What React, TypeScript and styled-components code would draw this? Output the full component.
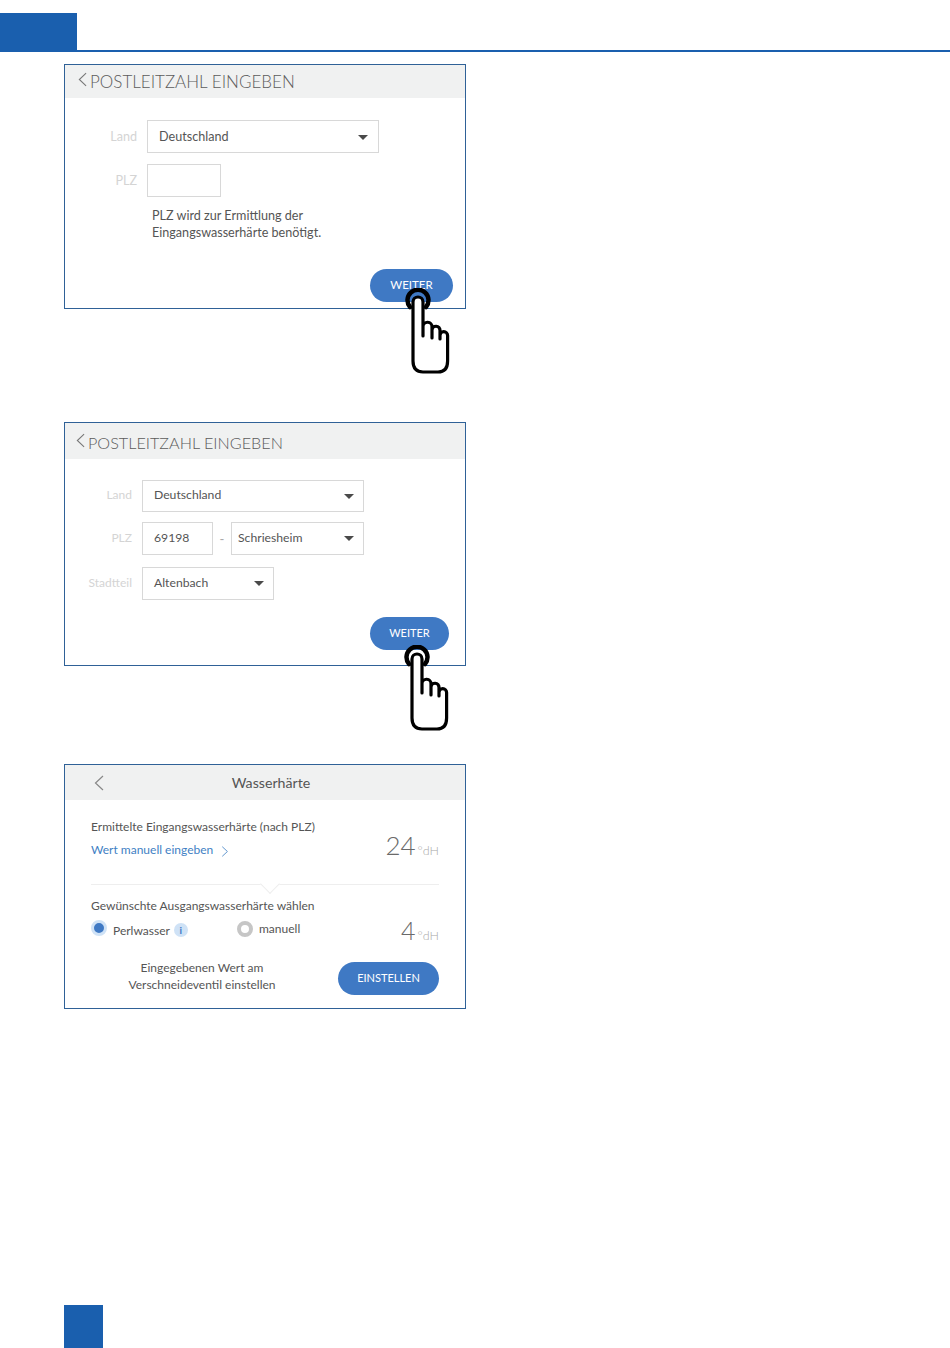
import React from 'react';
import styled, { createGlobalStyle } from 'styled-components';

const GlobalStyle = createGlobalStyle`
  html, body { margin: 0; padding: 0; background: #fff; }
  body { font-family: Lato, "Open Sans", sans-serif; color: #555; }
`;

const Page = styled.div`
  width: 950px;
  height: 1348px;
  display: flex;
  flex-direction: column;
  overflow: hidden;
`;

const TopBar = styled.div`
  height: 37px;
  margin-top: 13px;
  border-bottom: 2px solid #1a5fae;
  flex: none;
`;

const TopBlock = styled.div`
  width: 77px;
  height: 38px;
  background: #1a5fae;
`;

const Panels = styled.div`
  flex: 1;
  padding: 12px 0 0 64px;
  display: flex;
  flex-direction: column;
`;

const Panel = styled.section<{ $height: number; $gap?: number }>`
  position: relative;
  box-sizing: border-box;
  width: 402px;
  height: ${(p) => p.$height}px;
  margin-bottom: ${(p) => p.$gap ?? 0}px;
  border: 1px solid #2f6197;
  display: flex;
  flex-direction: column;
`;

const Header = styled.header<{ $height: number; $indent: number; $size: number; $nudge: number }>`
  box-sizing: border-box;
  height: ${(p) => p.$height}px;
  flex: none;
  background: #f0f1f1;
  display: flex;
  align-items: center;
  padding-left: ${(p) => p.$indent}px;
  padding-top: ${(p) => Math.max(p.$nudge, 0)}px;
  padding-bottom: ${(p) => Math.max(-p.$nudge, 0)}px;
  gap: 3px;
  font-size: ${(p) => p.$size}px;
  font-weight: 300;
  color: #5c5c5c;

  svg {
    margin-top: -4px;
  }
`;

const CenteredHeader = styled.header`
  height: 35px;
  flex: none;
  background: #f0f1f1;
  display: grid;
  grid-template-columns: 27px 1fr 44px;
  align-items: center;
  padding-left: 29px;
  font-size: 14.2px;
  color: #555;
`;

const HeaderTitle = styled.span`
  text-align: center;
`;

const Form = styled.div<{ $top: number; $rowGap: number }>`
  display: flex;
  flex-direction: column;
  gap: ${(p) => p.$rowGap}px;
  padding-top: ${(p) => p.$top}px;
`;

const Row = styled.div<{ $extra?: number }>`
  display: flex;
  align-items: center;
  margin-top: ${(p) => p.$extra ?? 0}px;
`;

const Label = styled.span<{ $width: number; $gap: number; $size: number; $lift: number }>`
  width: ${(p) => p.$width}px;
  margin-right: ${(p) => p.$gap}px;
  padding-bottom: ${(p) => p.$lift}px;
  text-align: right;
  font-size: ${(p) => p.$size}px;
  color: #d4d4d4;
  flex: none;
`;

const Field = styled.div<{ $width: number; $height: number; $pad: number; $size: number; $lift: number; $end?: number }>`
  box-sizing: border-box;
  width: ${(p) => p.$width}px;
  height: ${(p) => p.$height}px;
  padding: 0 ${(p) => p.$end ?? 9}px ${(p) => p.$lift}px ${(p) => p.$pad}px;
  border: 1px solid #d8d8d8;
  display: flex;
  align-items: center;
  justify-content: space-between;
  font-size: ${(p) => p.$size}px;
  color: #555;
  flex: none;
`;

const Caret = styled.span`
  width: 0;
  height: 0;
  margin-top: 3px;
  border-left: 5px solid transparent;
  border-right: 5px solid transparent;
  border-top: 5px solid #4a4a4a;
`;

const Dash = styled.span`
  width: 18px;
  text-align: center;
  font-size: 13px;
  color: #aaa;
  flex: none;
`;

const Help = styled.p`
  margin: 10px 0 0 87px;
  font-size: 12.6px;
  line-height: 17px;
  color: #555;
`;

const Pill = styled.div<{ $width: number; $size: number }>`
  box-sizing: border-box;
  width: ${(p) => p.$width}px;
  height: 33px;
  padding-bottom: 2px;
  border-radius: 17px;
  background: #3f79c4;
  color: #fff;
  font-size: ${(p) => p.$size}px;
  display: flex;
  align-items: center;
  justify-content: center;
  flex: none;
`;

const Actions = styled.div<{ $right: number; $bottom: number }>`
  margin-top: auto;
  padding: 0 ${(p) => p.$right}px ${(p) => p.$bottom}px 0;
  display: flex;
  justify-content: flex-end;
`;

const HandSlot = styled.svg<{ $left: number; $top: number }>`
  position: absolute;
  left: ${(p) => p.$left}px;
  top: ${(p) => p.$top}px;
`;

const Body = styled.div`
  padding: 19px 26px 0;
  display: flex;
  flex-direction: column;
  flex: 1;
`;

const Split = styled.div<{ $align: string }>`
  display: flex;
  justify-content: space-between;
  align-items: ${(p) => p.$align};
`;

const BodyText = styled.div`
  font-size: 12px;
  line-height: 16px;
  color: #555;
`;

const Link = styled.div`
  margin-top: 7px;
  display: flex;
  align-items: center;
  gap: 8px;
  font-size: 12px;
  line-height: 16px;
  color: #3f7fc4;

  svg {
    margin-top: 2px;
  }
`;

const Hardness = styled.div<{ $top: number }>`
  margin-top: ${(p) => p.$top}px;
  display: flex;
  align-items: baseline;
  gap: 2px;
  font-weight: 300;
  color: #6a6a6a;
`;

const HardnessValue = styled.span<{ $size: number }>`
  font-size: ${(p) => p.$size}px;
  line-height: 26px;
`;

const HardnessUnit = styled.span`
  font-size: 12.5px;
  color: #a9a9a9;
`;

const Divider = styled.div`
  position: relative;
  height: 1px;
  margin: 26px 0 13px;
  background: #eeeeee;
`;

const Notch = styled.span`
  position: absolute;
  left: 172px;
  top: -7px;
  width: 13px;
  height: 13px;
  background: #fff;
  border-right: 1px solid #eeeeee;
  border-bottom: 1px solid #eeeeee;
  transform: rotate(45deg);
`;

const Options = styled.div`
  display: flex;
  align-items: center;
  margin-top: 6px;
`;

const Option = styled.div<{ $width: number; $drop?: number }>`
  width: ${(p) => p.$width}px;
  display: flex;
  align-items: center;
  gap: 6px;
  font-size: 12px;
  position: relative;
  top: ${(p) => p.$drop ?? 0}px;
`;

const RadioOn = styled.span`
  box-sizing: border-box;
  width: 16px;
  height: 16px;
  border-radius: 50%;
  background: #3f79c4;
  border: 3px solid #cfe2f6;
  flex: none;
  position: relative;
  top: -2px;
`;

const RadioOff = styled.span`
  box-sizing: border-box;
  width: 16px;
  height: 16px;
  border-radius: 50%;
  background: #fff;
  border: 4px solid #c6c6c6;
  flex: none;
  position: relative;
  top: 1px;
`;

const Info = styled.span`
  width: 14px;
  height: 14px;
  margin-left: -2px;
  border-radius: 50%;
  background: #cfe2f6;
  color: #3f79c4;
  font-size: 10px;
  font-weight: 700;
  display: flex;
  align-items: center;
  justify-content: center;
`;

const Footer = styled.div`
  display: flex;
  align-items: center;
  justify-content: space-between;
  margin-top: 16px;
`;

const FooterText = styled.div`
  width: 222px;
  padding-bottom: 4px;
  text-align: center;
  font-size: 12px;
  line-height: 17px;
  color: #555;
`;

const BottomBlock = styled.div`
  width: 39px;
  height: 43px;
  background: #1a5fae;
  flex: none;
`;

const Chevron = ({ dir, w, h, color }: { dir: 'left' | 'right'; w: number; h: number; color: string }) => (
  <svg width={w} height={h} viewBox="0 0 10 16" fill="none">
    <path
      d={dir === 'left' ? 'M9 1 L1.5 8 L9 15' : 'M1 1 L8.5 8 L1 15'}
      stroke={color}
      strokeWidth="1.2"
    />
  </svg>
);

const Hand = ({ left, top }: { left: number; top: number }) => (
  <HandSlot $left={left} $top={top} width="46" height="90" viewBox="0 0 46 90" fill="none">
    <path d="M5 19 A10.5 10.5 0 1 1 21 19" stroke="#000" strokeWidth="4.5" strokeLinecap="round" />
    <path
      d="M8 73 V14 a5 5 0 0 1 10 0 V48 V38.5 a4.5 4.5 0 0 1 9 0.5 V50 V42 a4 4 0 0 1 8 0.5 V51 V47.5 a3.8 3.8 0 0 1 7.6 0 V73 Q42.6 84 33 84 H18 Q8 84 8 73 Z"
      fill="#fff"
      stroke="#000"
      strokeWidth="3.2"
      strokeLinejoin="round"
    />
  </HandSlot>
);

export default function App() {
  return (
    <Page>
      <GlobalStyle />
      <TopBar>
        <TopBlock />
      </TopBar>
      <Panels>
        <Panel $height={245} $gap={113}>
          <Header $height={33} $indent={13} $size={17} $nudge={-1}>
            <Chevron dir="left" w={9} h={15} color="#777" />
            POSTLEITZAHL EINGEBEN
          </Header>
          <Form $top={22} $rowGap={11}>
            <Row>
              <Label $width={72} $gap={10} $size={12.6} $lift={0}>Land</Label>
              <Field $width={232} $height={33} $pad={11} $size={12.6} $lift={1} $end={10}>
                Deutschland
                <Caret />
              </Field>
            </Row>
            <Row>
              <Label $width={72} $gap={10} $size={12.6} $lift={0}>PLZ</Label>
              <Field $width={74} $height={33} $pad={11} $size={12.6} $lift={1} />
            </Row>
          </Form>
          <Help>
            PLZ wird zur Ermittlung der
            <br />
            Eingangswasserhärte benötigt.
          </Help>
          <Actions $right={12} $bottom={6}>
            <Pill $width={83} $size={11.5}>WEITER</Pill>
          </Actions>
          <Hand left={340} top={223} />
        </Panel>

        <Panel $height={244} $gap={98}>
          <Header $height={36} $indent={11} $size={16.2} $nudge={2}>
            <Chevron dir="left" w={9} h={15} color="#777" />
            POSTLEITZAHL EINGEBEN
          </Header>
          <Form $top={21} $rowGap={10}>
            <Row>
              <Label $width={67} $gap={10} $size={12} $lift={3}>Land</Label>
              <Field $width={222} $height={32} $pad={11} $size={12.2} $lift={3}>
                Deutschland
                <Caret />
              </Field>
            </Row>
            <Row>
              <Label $width={67} $gap={10} $size={12} $lift={3}>PLZ</Label>
              <Field $width={71} $height={33} $pad={11} $size={12.2} $lift={3}>69198</Field>
              <Dash>-</Dash>
              <Field $width={133} $height={33} $pad={6} $size={12.2} $lift={3}>
                Schriesheim
                <Caret />
              </Field>
            </Row>
            <Row $extra={2}>
              <Label $width={67} $gap={10} $size={12} $lift={2}>Stadtteil</Label>
              <Field $width={132} $height={33} $pad={11} $size={12.2} $lift={3}>
                Altenbach
                <Caret />
              </Field>
            </Row>
          </Form>
          <Actions $right={16} $bottom={15}>
            <Pill $width={79} $size={11}>WEITER</Pill>
          </Actions>
          <Hand left={339} top={222} />
        </Panel>

        <Panel $height={245} $gap={296}>
          <CenteredHeader>
            <Chevron dir="left" w={10} h={16} color="#888" />
            <HeaderTitle>Wasserhärte</HeaderTitle>
          </CenteredHeader>
          <Body>
            <Split $align="flex-end">
              <div>
                <BodyText>Ermittelte Eingangswasserhärte (nach PLZ)</BodyText>
                <Link>
                  Wert manuell eingeben
                  <Chevron dir="right" w={8} h={11} color="#3f7fc4" />
                </Link>
              </div>
              <Hardness $top={0}>
                <HardnessValue $size={26}>24</HardnessValue>
                <HardnessUnit>°dH</HardnessUnit>
              </Hardness>
            </Split>
            <Divider>
              <Notch />
            </Divider>
            <BodyText>Gewünschte Ausgangswasserhärte wählen</BodyText>
            <Split $align="flex-start">
              <Options>
                <Option $width={146} $drop={2}>
                  <RadioOn />
                  Perlwasser
                  <Info>i</Info>
                </Option>
                <Option $width={100}>
                  <RadioOff />
                  manuell
                </Option>
              </Options>
              <Hardness $top={3}>
                <HardnessValue $size={25}>4</HardnessValue>
                <HardnessUnit>°dH</HardnessUnit>
              </Hardness>
            </Split>
            <Footer>
              <FooterText>
                Eingegebenen Wert am
                <br />
                Verschneideventil einstellen
              </FooterText>
              <Pill $width={101} $size={11}>EINSTELLEN</Pill>
            </Footer>
          </Body>
        </Panel>
        <BottomBlock />
      </Panels>
    </Page>
  );
}
